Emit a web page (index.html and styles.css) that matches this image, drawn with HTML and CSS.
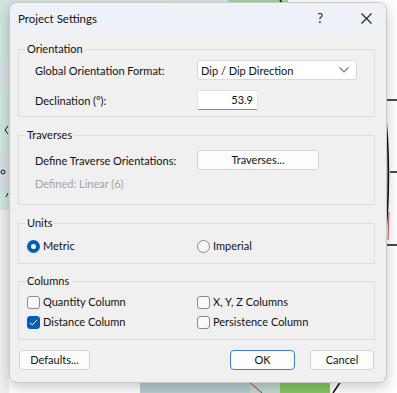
FILE: index.html
```html
<!DOCTYPE html>
<html lang="en">
<head>
    <meta charset="UTF-8">
    <meta name="viewport" content="width=device-width, initial-scale=1.0">
    <title>Project Settings</title>
    <link rel="stylesheet" href="styles.css">
</head>
<body>
    <!-- stereonet plot behind the dialog -->
    <svg class="backdrop" width="397" height="393" viewBox="0 0 397 393">
      <rect width="397" height="393" fill="#ffffff"/>
      <rect x="0" y="0" width="240" height="210" fill="#cfe7df"/>
      <rect x="0" y="210" width="9" height="183" fill="#eef0f0"/>
      <rect x="0" y="60" width="9" height="30" fill="#d9e2e2"/>
      <rect x="0" y="150" width="9" height="40" fill="#d6e1e1"/>
      <rect x="170" y="0" width="60" height="6" fill="#dde3ec"/>
      <rect x="228" y="0" width="60" height="6" fill="#9fd9a0"/>
      <rect x="140" y="380" width="110" height="13" fill="#b9cdcf"/>
      <rect x="250" y="380" width="30" height="13" fill="#c3d9cf"/>
      <rect x="280" y="380" width="50" height="13" fill="#86c765"/>
      <path d="M384 100 Q393 175 384 250 L384 100 Z" fill="#7cc86a"/>
      <path d="M384 100 Q393 175 384 250" fill="none" stroke="#111" stroke-width="1.5"/>
      <path d="M387 100 L397 100 M390 172 L397 172 M387 245 L397 245" stroke="#111" stroke-width="1.5"/>
      <path d="M389 212 L388 240" stroke="#a83030" stroke-width="0.8"/>
      <path d="M247 380 L262 393" stroke="#a83030" stroke-width="1"/>
      <path d="M333 393 L341 381" stroke="#111" stroke-width="1.5"/>
      <path d="M280 0 L282 3" stroke="#111" stroke-width="1.5"/>
      <path d="M8 126 L5 130 L8 134" stroke="#111" fill="none"/>
      <circle cx="3" cy="172" r="2" fill="none" stroke="#111"/>
      <path d="M8 193 L6 197" stroke="#111"/>
    </svg>

    <div class="dialog">
      <div class="titlebar">
        <span class="title">Project Settings</span>
        <span class="help">?</span>
        <svg class="close" width="11" height="11" viewBox="0 0 11 11">
          <path d="M0.5 0.5 L10.5 10.5 M10.5 0.5 L0.5 10.5" stroke="#222" stroke-width="1.1"/>
        </svg>
      </div>

      <div class="content">
        <fieldset class="group orientation">
          <legend>Orientation</legend>
          <div class="row">
            <span class="label">Global Orientation Format:</span>
            <div class="select">
              <span>Dip / Dip Direction</span>
              <svg width="10" height="6" viewBox="0 0 10 6">
                <path d="M0.5 0.5 L5 5 L9.5 0.5" stroke="#777" fill="none" stroke-width="1.1"/>
              </svg>
            </div>
          </div>
          <div class="row">
            <span class="label">Declination (°):</span>
            <div class="textbox">53.9</div>
          </div>
        </fieldset>

        <fieldset class="group traverses">
          <legend>Traverses</legend>
          <div class="row">
            <span class="label">Define Traverse Orientations:</span>
            <div class="btn traverse-btn">Traverses...</div>
          </div>
          <div class="note">Defined: Linear (6)</div>
        </fieldset>

        <fieldset class="group units">
          <legend>Units</legend>
          <div class="row">
            <label class="option"><span class="radio checked"></span>Metric</label>
            <label class="option"><span class="radio"></span>Imperial</label>
          </div>
        </fieldset>

        <fieldset class="group columns">
          <legend>Columns</legend>
          <div class="row">
            <label class="option"><span class="check"></span>Quantity Column</label>
            <label class="option"><span class="check"></span>X, Y, Z Columns</label>
          </div>
          <div class="row">
            <label class="option">
              <span class="check checked">
                <svg width="9" height="7" viewBox="0 0 9 7"><path d="M0.8 3.6 L3.3 6 L8.2 0.8" stroke="#fff" fill="none" stroke-width="1"/></svg>
              </span>Distance Column</label>
            <label class="option"><span class="check"></span>Persistence Column</label>
          </div>
        </fieldset>

        <div class="footer">
          <div class="btn defaults">Defaults...</div>
          <div class="btn ok">OK</div>
          <div class="btn cancel">Cancel</div>
        </div>
      </div>
    </div>
</body>
</html>
```

FILE: styles.css
```css
body {
  margin: 0;
  width: 397px;
  height: 393px;
  overflow: hidden;
  font-family: "Lato", sans-serif;
  font-size: 11px;
  color: #111;
}

.backdrop {
  position: absolute;
  left: 0;
  top: 0;
}

.dialog {
  position: absolute;
  left: 9px;
  top: 2px;
  width: 378px;
  height: 381px;
  background-color: #f0f0f0;
  border: 1px solid #c9c9c9;
  border-radius: 8px;
  box-sizing: border-box;
  overflow: hidden;
  box-shadow: 0 4px 14px rgba(0, 0, 0, 0.22);
}

.titlebar {
  height: 30px;
  background-color: #eef1f8;
  display: flex;
  align-items: center;
  padding-left: 8px;
}

.title {
  flex: 1;
  font-size: 11.5px;
}

.help {
  font-size: 13px;
  margin-right: 38px;
}

.close {
  margin-right: 14px;
}

.content {
  padding: 8px 11px 0 8px;
}

.group {
  margin: 0 0 10px 0;
  border: 1px solid #dcdcdc;
  padding: 0 0 0 8px;
}

.group legend {
  margin-left: -2px;
  padding: 0 2px;
  line-height: 16px;
}

.row {
  display: flex;
  align-items: center;
}

.label {
  width: 162px;
}

.orientation,
.traverses {
  padding-left: 16px;
}

.orientation legend,
.traverses legend {
  margin-left: -10px;
}

.orientation {
  padding-top: 3px;
  padding-bottom: 6px;
}

.orientation .row + .row {
  margin-top: 10px;
}

.select {
  width: 160px;
  height: 20px;
  box-sizing: border-box;
  background-color: #fff;
  border: 1px solid #d8d8d8;
  border-radius: 3px;
  display: flex;
  align-items: center;
  justify-content: space-between;
  padding: 0 7px 0 3px;
}

.textbox {
  width: 61px;
  height: 20px;
  box-sizing: border-box;
  background-color: #fff;
  border: 1px solid #e2e2e2;
  border-bottom-color: #8c8c8c;
  border-radius: 2px;
  text-align: right;
  padding-right: 4px;
  line-height: 18px;
}

.btn {
  height: 20px;
  box-sizing: border-box;
  background-color: #fdfdfd;
  border: 1px solid #d2d2d2;
  border-radius: 4px;
  text-align: center;
  line-height: 18px;
}

.traverses {
  padding-top: 7px;
  padding-bottom: 12px;
}

.traverse-btn {
  width: 122px;
}

.note {
  color: #a3a3a3;
  margin-top: 6px;
  line-height: 16px;
}

.units {
  margin-bottom: 9px;
  padding-top: 7px;
  padding-bottom: 9px;
}

.option {
  display: flex;
  align-items: center;
  width: 170px;
  line-height: 16px;
}

.radio {
  width: 13px;
  height: 13px;
  box-sizing: border-box;
  border-radius: 50%;
  border: 1px solid #8a8a8a;
  background-color: #f7f7f7;
  margin-right: 3px;
}

.radio.checked {
  border: 4px solid #005fb8;
  background-color: #fff;
}

.columns {
  padding-top: 5px;
  padding-bottom: 9px;
}

.columns .row + .row {
  margin-top: 4px;
}

.check {
  width: 13px;
  height: 13px;
  box-sizing: border-box;
  border-radius: 3px;
  border: 1px solid #8a8a8a;
  background-color: #f9f9f9;
  margin-right: 3px;
  display: flex;
  align-items: center;
  justify-content: center;
}

.check.checked {
  border-color: #005fb8;
  background-color: #005fb8;
}

.footer {
  display: flex;
  margin-top: 4px;
}

.defaults {
  width: 71px;
  margin-left: 1px;
}

.ok {
  width: 65px;
  margin-left: auto;
  border-color: #3d7fd1;
}

.cancel {
  width: 64px;
  margin-left: 15px;
  margin-right: 1px;
}
```
